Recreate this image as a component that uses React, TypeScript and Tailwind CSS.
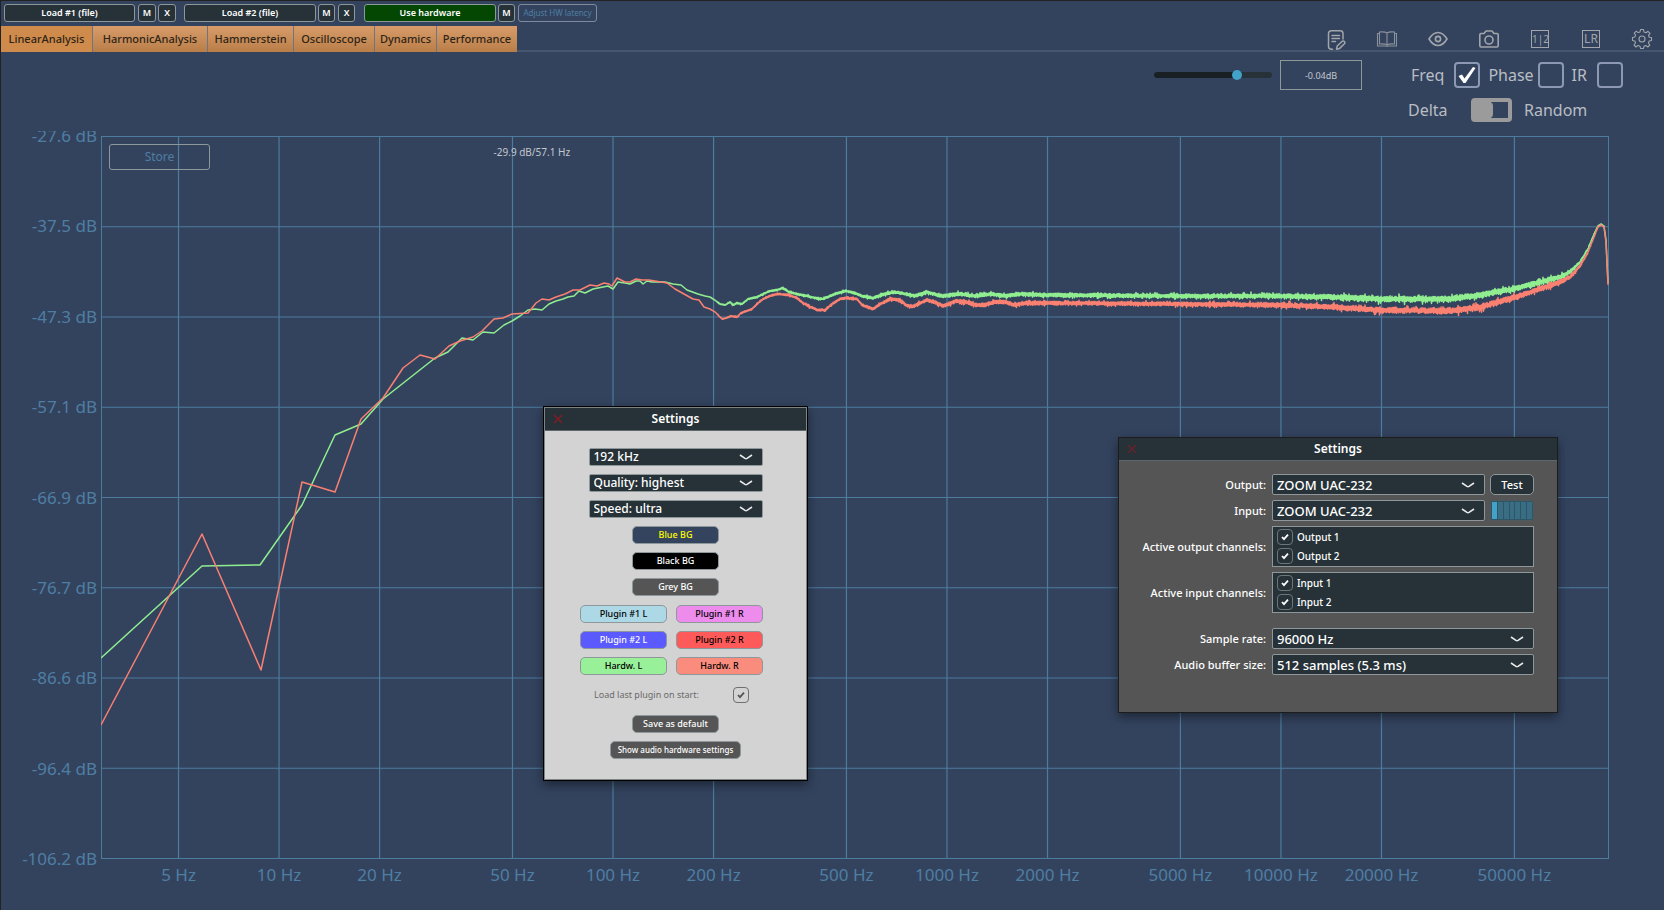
import { useId } from "react";
import type { ReactNode } from "react";

// ============================================================================
// CURVE DATA: control points in plot coordinates, [x, y]
// ============================================================================

type Point = [number, number];

const greenPoints: Point[] = [
  [101, 658], [202, 566], [260, 565], [302, 505], [335, 435], [361, 424], [383, 399], [435, 358], [448, 352],
  [462, 338], [473, 340], [483, 332], [494, 333], [504, 325], [512, 321], [520, 316], [528, 310], [535, 309],
  [542, 310], [549, 304], [556, 301], [563, 299], [568, 297], [574, 296], [579, 291], [585, 293], [593, 289],
  [603, 287], [608, 286], [613, 289], [618, 282], [625, 283], [630, 284], [636, 281], [640, 281], [643, 284],
  [647, 281], [652, 282], [665, 282], [673, 284], [681, 285], [687, 290], [698, 294], [705, 296], [710, 297],
  [716, 301], [720, 304], [725, 305], [730, 302], [733, 305], [737, 303], [742, 304], [748, 299], [757, 297],
  [763, 294], [770, 291], [777, 290], [783, 288], [789, 292], [797, 294], [807, 296], [815, 298], [823, 299],
  [830, 296], [838, 293], [846, 291], [855, 293], [862, 296], [873, 298], [884, 294], [895, 292], [906, 294],
  [915, 296], [927, 292], [940, 296], [960, 294], [975, 296], [990, 294], [1005, 296], [1020, 294], [1047, 295],
  [1180, 296], [1280, 296], [1330, 297], [1380, 299], [1450, 299], [1480, 295], [1513, 289], [1560, 277],
  [1570, 272], [1580, 262], [1588, 249], [1594, 234], [1598, 226], [1601, 224], [1604, 226], [1606, 240], [1608, 283],
];

const redPoints: Point[] = [
  [101, 725], [202, 534], [261, 670], [302, 482], [335, 492], [361, 419], [383, 398], [403, 368], [420, 355],
  [435, 359], [449, 346], [460, 341], [473, 337], [482, 331], [494, 319], [503, 318], [512, 314], [528, 313],
  [536, 303], [542, 299], [549, 300], [556, 297], [565, 294], [573, 290], [580, 290], [590, 285], [597, 286],
  [604, 283], [609, 284], [612, 286], [617, 278], [625, 282], [630, 282], [636, 279], [642, 280], [649, 280],
  [655, 281], [667, 283], [675, 289], [684, 294], [693, 299], [699, 300], [704, 307], [710, 309], [716, 313],
  [722, 319], [726, 318], [731, 316], [737, 317], [741, 313], [752, 309], [757, 304], [763, 299], [770, 296],
  [777, 294], [789, 295], [797, 298], [803, 303], [810, 307], [818, 310], [825, 310], [832, 304], [840, 299],
  [846, 298], [857, 299], [862, 305], [873, 309], [882, 303], [890, 299], [900, 300], [906, 305], [912, 307],
  [918, 304], [927, 300], [937, 303], [943, 306], [956, 301], [966, 302], [975, 305], [985, 305], [995, 302],
  [1005, 302], [1015, 305], [1025, 303], [1060, 303], [1180, 304], [1280, 305], [1330, 307], [1380, 310],
  [1450, 311], [1480, 307], [1513, 298], [1560, 282], [1570, 277], [1580, 266], [1588, 252], [1594, 237],
  [1598, 227], [1601, 225], [1604, 227], [1606, 242], [1608, 285],
];

// Half the thickness of the noise band at a given x
const noisePoints: Point[] = [
  [101, 0], [700, 0], [730, 0.7], [850, 1.2], [950, 2], [1200, 2.2], [1300, 2.6], [1380, 3.2], [1480, 3.4],
  [1560, 2.8], [1580, 1.4], [1595, 0.5], [1608, 0],
];

function interpolate(points: Point[], x: number) {
  const next = points.findIndex((p) => p[0] >= x);
  if (next <= 0) return points[0][1];
  const [x0, y0] = points[next - 1];
  const [x1, y1] = points[next];
  return y0 + ((x - x0) / (x1 - x0)) * (y1 - y0);
}

function buildTrace(points: Point[], seed: number) {
  let state = seed;
  const random = () => {
    state = (state * 16807) % 2147483647;
    return state / 2147483647;
  };
  const coords = points.filter((p) => p[0] < 716).map((p) => p.join(","));
  let side = 1;
  for (let x = 716; x <= 1608; x += 0.5) {
    // swing from side to side so the band fills in, with a rare longer spike
    side = -side;
    const spread = side * (0.35 + random() * 0.5 + random() ** 8 * 0.9);
    coords.push(`${x},${(interpolate(points, x) + spread * interpolate(noisePoints, x)).toFixed(1)}`);
  }
  return coords.join(" ");
}

const greenTrace = buildTrace(greenPoints, 77);
const redTrace = buildTrace(redPoints, 4211);

const levels = ["-27.6 dB", "-37.5 dB", "-47.3 dB", "-57.1 dB", "-66.9 dB", "-76.7 dB", "-86.6 dB", "-96.4 dB", "-106.2 dB"];
const frequencies = [5, 10, 20, 50, 100, 200, 500, 1000, 2000, 5000, 10000, 20000, 50000];
const minFreq = 2.93;
const maxFreq = 96000;

const freqPosition = (f: number) => Math.log(f / minFreq) / Math.log(maxFreq / minFreq);

// ============================================================================
// SHARED CONTROLS
// ============================================================================

function BarButton({ children, className }: { children: ReactNode; className: string }) {
  return (
    <button className={`h-[18px] rounded-[3px] border leading-4 whitespace-nowrap ${className}`}>{children}</button>
  );
}

function Combo({ label, value, className }: { label: string; value: string; className: string }) {
  return (
    <span className={`relative block ${className}`}>
      <select
        aria-label={label}
        className="block h-full w-full appearance-none rounded-[2px] border border-[#8e989b] bg-[#263238] pl-1 leading-4 font-medium text-white"
      >
        <option>{value}</option>
      </select>
      <svg viewBox="0 0 14 6" className="pointer-events-none absolute top-1/2 right-2.5 h-1.5 w-3.5 -translate-y-1/2" fill="none" stroke="#e8eaeb" strokeWidth="1.6">
        <path d="M1 1 L6 4.4 Q7 5 8 4.4 L13 1" />
      </svg>
    </span>
  );
}

function TickBox({ id, className, tick }: { id: string; className: string; tick: string }) {
  return (
    <span className="relative block size-4 shrink-0">
      <input id={id} type="checkbox" defaultChecked className={`block size-4 appearance-none rounded-[4px] border ${className}`} />
      <svg viewBox="0 0 16 16" className="pointer-events-none absolute inset-0 size-4" fill="none" stroke={tick} strokeWidth="1.8">
        <path d="M5 8 L7 10.2 L11 5.6" />
      </svg>
    </span>
  );
}

function TitleBar({ cross }: { cross: string }) {
  return (
    <header className="relative flex h-[23px] items-center justify-center border-b border-[#5d686c] bg-[#263238]">
      <button aria-label="Close" className="absolute left-2 flex size-2.5">
        <svg viewBox="0 0 10 10" className="size-2.5" stroke={cross} strokeWidth="1.2">
          <path d="M1 1 L9 9 M9 1 L1 9" />
        </svg>
      </button>
      <h2 className="text-[12px] leading-4 font-semibold text-white">Settings</h2>
    </header>
  );
}

// ============================================================================
// TOP BAR + TABS
// ============================================================================

function TopBar() {
  const dark = "border-[#8e989b] bg-[#263238] text-[9px] font-semibold text-white";
  return (
    <div className="flex h-6 items-center pl-[3px]">
      <BarButton className={`w-[131px] ${dark}`}>Load #1 (file)</BarButton>
      <BarButton className={`ml-[3px] w-[18px] ${dark}`}>M</BarButton>
      <BarButton className={`ml-0.5 w-[18px] ${dark}`}>X</BarButton>
      <BarButton className={`ml-2 w-[132px] ${dark}`}>Load #2 (file)</BarButton>
      <BarButton className={`ml-0.5 w-[17px] ${dark}`}>M</BarButton>
      <BarButton className={`ml-[3px] w-[17px] ${dark}`}>X</BarButton>
      <BarButton className="ml-[9px] w-[132px] border-[#8e989b] bg-[#034703] text-[9px] font-semibold text-white">Use hardware</BarButton>
      <BarButton className={`ml-0.5 w-[17px] ${dark}`}>M</BarButton>
      <BarButton className="ml-[3px] w-[79px] border-[#7f8b9c] text-[8px] text-[#4f7ea3]">Adjust HW latency</BarButton>
    </div>
  );
}

const tabs = [
  { name: "LinearAnalysis", width: "w-[92px]" },
  { name: "HarmonicAnalysis", width: "w-[115px]" },
  { name: "Hammerstein", width: "w-[86px]" },
  { name: "Oscilloscope", width: "w-[81px]" },
  { name: "Dynamics", width: "w-[62px]" },
  { name: "Performance", width: "w-[80px]" },
];

function ToolIcons() {
  return (
    <div className="flex items-center gap-[29px] pr-[11px] text-[#a2a5a9]">
      <button aria-label="Notes">
        <svg viewBox="0 0 22 22" className="size-[22px]" fill="none" stroke="currentColor" strokeWidth="1.5" strokeLinecap="round" strokeLinejoin="round">
          <path d="M7.500 21.200 H6.500 Q3.500 21.200 3.500 18.200 V5.500 Q3.500 2.800 6.500 2.800 H15 Q18 2.800 18 5.500 V11" />
          <path d="M7 7.500 H14.500 M7 10.500 H14.500 M7 13.500 H10.500" />
          <path d="M11.500 21.200 L12.200 18 L17.200 13.200 Q18.500 12.600 19.400 13.600 Q20.300 14.600 19.400 15.800 L14.400 20.600 Z" />
        </svg>
      </button>
      <button aria-label="Manual">
        <svg viewBox="0 0 22 22" className="size-[22px] opacity-80" fill="none" stroke="currentColor" strokeWidth="1.1">
          <path d="M11 5 Q9 3.4 3.5 4 V16 Q9 15.6 11 17 Q13 15.6 18.5 16 V4 Q13 3.4 11 5 V17" />
          <path d="M3.5 5.500 H1.500 V18 H10 L11 18.500 L12 18 H20.500 V5.500 H18.500" />
        </svg>
      </button>
      <button aria-label="View">
        <svg viewBox="0 0 22 22" className="size-[22px]" fill="none" stroke="currentColor" strokeWidth="1.6">
          <path d="M2 11 Q6 4.500 11 4.500 Q16 4.500 20 11 Q16 17.500 11 17.500 Q6 17.500 2 11 Z" />
          <circle cx="11" cy="11" r="2.600" />
        </svg>
      </button>
      <button aria-label="Snapshot">
        <svg viewBox="0 0 22 22" className="size-[22px]" fill="none" stroke="currentColor" strokeWidth="1.6" strokeLinejoin="round">
          <path d="M3 5.500 H6 L8 3 H14 L16 5.500 H19 Q20.200 5.500 20.200 7 V17.500 Q20.200 19 19 19 H3 Q1.800 19 1.800 17.500 V7 Q1.800 5.500 3 5.500 Z" />
          <circle cx="11" cy="12" r="4" />
        </svg>
      </button>
      <button className="flex size-[22px] items-center justify-center">
        <span className="block size-[18px] border border-current text-center text-[10px] leading-4">1|2</span>
      </button>
      <button className="flex size-[22px] items-center justify-center">
        <span className="block size-[18px] border border-current text-center text-[12px] leading-4">LR</span>
      </button>
      <button aria-label="Settings">
        <svg viewBox="0 0 22 22" className="size-[22px]" fill="none" stroke="currentColor" strokeWidth="1.1" strokeLinejoin="round">
          <path d="M9.500 1.500 H12.500 L13 4 L15 4.800 L17 3.300 L19 5.300 L17.500 7.300 L18.200 9.200 L20.500 9.500 V12.500 L18.200 13 L17.400 15 L18.800 17 L16.800 19 L14.800 17.500 L13 18.200 L12.500 20.500 H9.500 L9 18.200 L7 17.500 L5 19 L3 17 L4.500 15 L3.800 13 L1.500 12.500 V9.500 L3.800 9 L4.600 7 L3.200 5.200 L5.200 3.200 L7.200 4.600 L9 4 Z" />
          <circle cx="11" cy="11" r="3" />
        </svg>
      </button>
    </div>
  );
}

function TabBar() {
  return (
    <nav className="flex h-[27px] items-end justify-between border-b-2 border-[#45566f]">
      <div className="-mb-0.5 flex h-[26px]">
        {tabs.map((tab, i) => (
          <button
            key={tab.name}
            className={`${tab.width} border-r border-[#6f7580] text-center text-[11px] leading-4 font-medium text-[#2f2416] last:border-r-0 ${
              i === 0 ? "bg-[#ce8b4b]" : "bg-linear-to-b from-[#d79c69] to-[#b97e48]"
            }`}
          >
            {tab.name}
          </button>
        ))}
      </div>
      <ToolIcons />
    </nav>
  );
}

// ============================================================================
// VIEW OPTIONS: gain, curve toggles
// ============================================================================

function CurveToggle({ label, checked = false, className }: { label: string; checked?: boolean; className: string }) {
  const id = useId();
  return (
    <div className={`flex items-center ${className}`}>
      <label htmlFor={id}>{label}</label>
      <span className="relative block size-[26px]">
        <input id={id} type="checkbox" defaultChecked={checked} className="block size-[26px] appearance-none rounded-[4px] border-2 border-[#8d99b4]" />
        {checked && (
          <svg viewBox="0 0 26 26" className="pointer-events-none absolute inset-0 size-[26px]" fill="#ffffff">
            <path d="M4.500 14 L8 12.500 L10.500 16.500 L19 5 L21.500 6 L11.500 21 H9.500 Z" />
          </svg>
        )}
      </span>
    </div>
  );
}

function ViewOptions() {
  return (
    <div className="flex h-[84px] items-start justify-end pt-2 pr-[41px] text-[16px] leading-6 text-[#b9bdc3]">
      <div className="flex items-center gap-2">
        <input
          type="range"
          aria-label="Gain"
          defaultValue={72}
          className="block h-4 w-[118px] appearance-none bg-transparent [&::-webkit-slider-runnable-track]:h-1.5 [&::-webkit-slider-runnable-track]:rounded-full [&::-webkit-slider-runnable-track]:bg-linear-to-r [&::-webkit-slider-runnable-track]:from-[#182024] [&::-webkit-slider-runnable-track]:from-70% [&::-webkit-slider-runnable-track]:to-[#263238] [&::-webkit-slider-runnable-track]:to-70% [&::-webkit-slider-thumb]:-mt-0.5 [&::-webkit-slider-thumb]:size-2.5 [&::-webkit-slider-thumb]:appearance-none [&::-webkit-slider-thumb]:rounded-full [&::-webkit-slider-thumb]:bg-[#42a2c8]"
        />
        <input aria-label="Gain value" defaultValue="-0.04dB" className="h-[30px] w-[82px] border border-[#8e989b] bg-transparent text-center text-[9px] leading-4 text-[#c3c7cc]" />
      </div>
      <div className="ml-[46px] w-[215px]">
        <div className="flex h-[30px] items-center justify-end gap-2">
          <CurveToggle label="Freq" checked className="gap-2.5" />
          <CurveToggle label="Phase" className="gap-1" />
          <CurveToggle label="IR" className="gap-2.5" />
        </div>
        <div className="mt-2 flex items-center gap-3">
          <label htmlFor="signal" className="w-[51px]">Delta</label>
          <span className="relative block h-6 w-[41px]">
            <input id="signal" type="checkbox" role="switch" className="block h-6 w-[41px] appearance-none rounded-[4px] bg-[#9b9b9b]" />
            <span className="pointer-events-none absolute top-1 right-1 h-4 w-[17px] bg-[#33435e]" />
            <span className="pointer-events-none absolute top-1 left-1 h-4 w-[18px] rounded-r-[4px] bg-[#9b9b9b]" />
          </span>
          <span>Random</span>
        </div>
      </div>
    </div>
  );
}

// ============================================================================
// PLOT
// ============================================================================

function Plot() {
  return (
    <main className="flex min-h-[400px] flex-1 flex-col pr-[55px]">
      <div className="flex flex-1">
        {/* the top label is cut off by the edge of the scale */}
        <div className="-mt-[5px] -mb-3 flex w-[100px] overflow-hidden">
          <div className="-mt-[7px] flex flex-1 flex-col justify-between pr-1 text-right text-[17px] leading-6 whitespace-nowrap text-[#4f7ea3]">
            {levels.map((level) => (
              <span key={level} className="block">{level}</span>
            ))}
          </div>
        </div>
        <div className="relative flex-1 border border-[#4d7b9e]">
          <div className="absolute -inset-px">
            <svg viewBox="101 136 1508 723" preserveAspectRatio="none" className="block size-full" fill="none">
              {levels.slice(1, -1).map((level, i) => (
                <line key={level} x1="101" x2="1609" y1={136.5 + (i + 1) * 90.25} y2={136.5 + (i + 1) * 90.25} stroke="#4d7b9e" strokeWidth="1.2" />
              ))}
              {frequencies.map((f) => (
                <line key={f} x1={101 + freqPosition(f) * 1508} x2={101 + freqPosition(f) * 1508} y1="136" y2="859" stroke="#4d7b9e" strokeWidth="1.2" />
              ))}
              <polyline points={greenTrace} stroke="#90ee90" strokeWidth="1.5" strokeLinejoin="round" />
              <polyline points={redTrace} stroke="#fa8072" strokeWidth="1.5" strokeLinejoin="round" />
            </svg>
          </div>
          <button className="absolute top-[7px] left-[7px] h-[26px] w-[101px] rounded-[3px] border border-[#8e989b] text-[12px] leading-4 text-[#4f7ea3]">
            Store
          </button>
          <span className="absolute top-[7px] left-[26%] text-[10px] leading-4 text-[#c3c7cc]">-29.9 dB/57.1 Hz</span>
        </div>
      </div>
      <div className="flex h-[51px]">
        <div className="w-[100px]" />
        <div className="relative flex-1 text-[17px] leading-6 whitespace-nowrap text-[#4f7ea3]">
          {frequencies.map((f) => (
            <span key={f} className="absolute top-1 -translate-x-1/2" style={{ left: `${freqPosition(f) * 100}%` }}>
              {f} Hz
            </span>
          ))}
        </div>
      </div>
    </main>
  );
}

// ============================================================================
// APPEARANCE SETTINGS
// ============================================================================

function PillButton({ children, className }: { children: ReactNode; className: string }) {
  return (
    <button className={`h-[18px] rounded-[5px] border border-[#8e989b] leading-4 font-medium whitespace-nowrap ${className}`}>
      {children}
    </button>
  );
}

function AppearanceSettings() {
  return (
    <section className="absolute top-[405px] left-[542px] w-[265px] border border-black bg-[#d3d3d3] shadow-[0_4px_10px_rgba(0,0,0,0.45)]">
      <div className="border border-[#7d8486]">
        <TitleBar cross="#8b1a22" />
        <div className="flex flex-col items-center gap-2 pt-[17px] pb-5 text-[9px]">
          <Combo label="Sample rate" value="192 kHz" className="h-[18px] w-[174px] text-[12px]" />
          <Combo label="Quality" value="Quality: highest" className="h-[18px] w-[174px] text-[12px]" />
          <Combo label="Speed" value="Speed: ultra" className="h-[18px] w-[174px] text-[12px]" />
          <PillButton className="w-[87px] bg-[#34445f] text-[#ffff00]">Blue BG</PillButton>
          <PillButton className="w-[87px] bg-black text-white">Black BG</PillButton>
          <PillButton className="w-[87px] bg-[#555555] text-white">Grey BG</PillButton>
          <div className="mt-px mr-2 grid grid-cols-2 gap-x-[9px] gap-y-2">
            <PillButton className="w-[87px] bg-[#add8e6] text-black">Plugin #1 L</PillButton>
            <PillButton className="w-[87px] bg-[#ee8cee] text-black">Plugin #1 R</PillButton>
            <PillButton className="w-[87px] bg-[#5a5aff] text-white">Plugin #2 L</PillButton>
            <PillButton className="w-[87px] bg-[#ff5a5a] text-black">Plugin #2 R</PillButton>
            <PillButton className="w-[87px] bg-[#98f098] text-black">Hardw. L</PillButton>
            <PillButton className="w-[87px] bg-[#fa8c7e] text-black">Hardw. R</PillButton>
          </div>
          <div className="my-1 mr-2 flex h-4 w-[155px] items-center justify-between">
            <label htmlFor="load-last" className="leading-4 text-[#6a6a6a]">Load last plugin on start:</label>
            <TickBox id="load-last" className="border-[#707070]" tick="#555555" />
          </div>
          <PillButton className="w-[87px] bg-[#555555] text-white">Save as default</PillButton>
          <PillButton className="w-[131px] bg-[#555555] text-[8px] text-white">Show audio hardware settings</PillButton>
        </div>
      </div>
    </section>
  );
}

// ============================================================================
// AUDIO DEVICE SETTINGS
// ============================================================================

function ChannelList({ names }: { names: string[] }) {
  return (
    <div className="flex h-[41px] flex-col justify-center gap-[3px] border border-[#8e989b] bg-[#263238] pl-1">
      {names.map((name) => (
        <div key={name} className="flex items-center gap-1">
          <TickBox id={name} className="border-[#6b767a]" tick="#ffffff" />
          <label htmlFor={name} className="text-[10px] leading-4 font-medium">{name}</label>
        </div>
      ))}
    </div>
  );
}

function DeviceRow({ label, className = "", children }: { label: string; className?: string; children: ReactNode }) {
  return (
    <div className={`grid grid-cols-[147px_262px] items-center gap-1.5 text-[13px] ${className}`}>
      <span className="text-right text-[11px] leading-4 font-medium">{label}</span>
      {children}
    </div>
  );
}

function AudioSettings() {
  return (
    <section className="absolute top-[436px] left-[1117px] w-[440px] border border-[#1c1c1c] bg-[#555555] text-white shadow-[0_4px_10px_rgba(0,0,0,0.45)]">
      <TitleBar cross="#6e1f28" />
      <div className="flex flex-col gap-[5px] pt-[13px] pb-[37px]">
        <DeviceRow label="Output:">
          <div className="flex gap-[5px]">
            <Combo label="Output" value="ZOOM UAC-232" className="h-[21px] w-[213px]" />
            <button className="h-[21px] flex-1 rounded-[5px] border border-[#8e989b] bg-[#263238] text-[11px] leading-4 font-medium">Test</button>
          </div>
        </DeviceRow>
        <DeviceRow label="Input:">
          <div className="flex gap-[5px]">
            <Combo label="Input" value="ZOOM UAC-232" className="h-[21px] w-[213px]" />
            <div className="flex h-[21px] flex-1 gap-px rounded-[3px] border border-[#4f5a5e] bg-[#2d5566] p-px">
              <span className="flex-1 bg-[#42a2c8]" />
              {[1, 2, 3, 4, 5, 6].map((n) => (
                <span key={n} className="flex-1 bg-[#396d83]" />
              ))}
            </div>
          </div>
        </DeviceRow>
        <DeviceRow label="Active output channels:">
          <ChannelList names={["Output 1", "Output 2"]} />
        </DeviceRow>
        <DeviceRow label="Active input channels:">
          <ChannelList names={["Input 1", "Input 2"]} />
        </DeviceRow>
        <DeviceRow label="Sample rate:" className="mt-2.5">
          <Combo label="Device sample rate" value="96000 Hz" className="h-[21px] w-full" />
        </DeviceRow>
        <DeviceRow label="Audio buffer size:">
          <Combo label="Audio buffer size" value="512 samples (5.3 ms)" className="h-[21px] w-full" />
        </DeviceRow>
      </div>
    </section>
  );
}

// ============================================================================
// MAIN WINDOW
// ============================================================================

export default function App() {
  return (
    <div className="relative flex min-h-screen flex-col overflow-hidden border-t border-l border-[#222222] bg-[#33435e] font-['Noto_Sans','Open_Sans',sans-serif]">
      <TopBar />
      <TabBar />
      <ViewOptions />
      <Plot />
      <AppearanceSettings />
      <AudioSettings />
    </div>
  );
}
